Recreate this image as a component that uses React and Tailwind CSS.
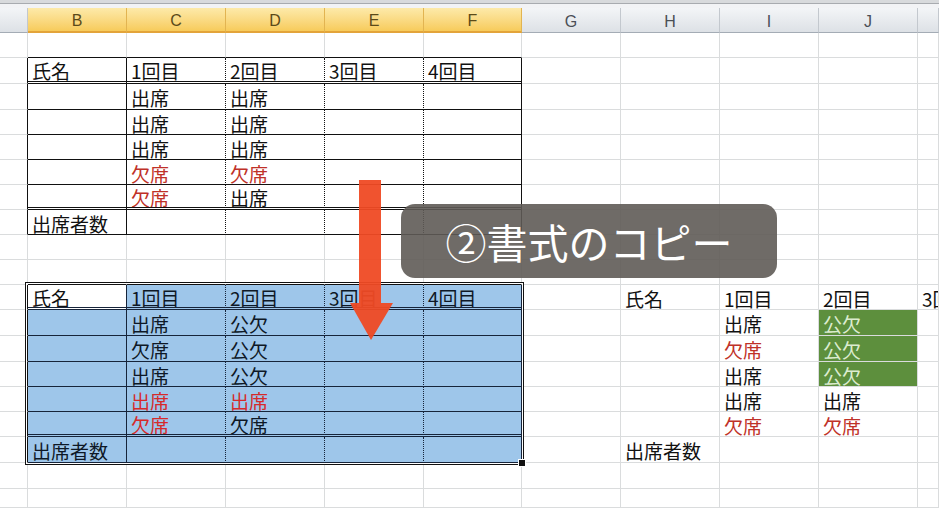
const COLS = [28, 99, 99, 99, 99, 98, 99, 99, 99, 99, 21];
const LETTERS = ["", "B", "C", "D", "E", "F", "G", "H", "I", "J", ""];
const ROWS = [25, 26, 26, 25, 25, 25, 25, 25, 25, 25, 25, 26, 26, 25, 25, 25, 26, 26, 19];

const red = (t) => ({ t, red: true });
const green = (t) => ({ t, green: true });

const HEAD = { 1: "氏名", 2: "1回目", 3: "2回目", 4: "3回目", 5: "4回目" };

const DATA = {
  1: HEAD,
  2: { 2: "出席", 3: "出席" },
  3: { 2: "出席", 3: "出席" },
  4: { 2: "出席", 3: "出席" },
  5: { 2: red("欠席"), 3: red("欠席") },
  6: { 2: red("欠席"), 3: "出席" },
  7: { 1: "出席者数" },
  10: { ...HEAD, 7: "氏名", 8: "1回目", 9: "2回目", 10: "3回目" },
  11: { 2: "出席", 3: "公欠", 8: "出席", 9: green("公欠") },
  12: { 2: "欠席", 3: "公欠", 8: red("欠席"), 9: green("公欠") },
  13: { 2: "出席", 3: "公欠", 8: "出席", 9: green("公欠") },
  14: { 2: red("出席"), 3: red("出席"), 8: "出席", 9: "出席" },
  15: { 2: red("欠席"), 3: "欠席", 8: red("欠席"), 9: red("欠席") },
  16: { 1: "出席者数", 7: "出席者数" },
};

const isTableRow = (r) => (r >= 1 && r <= 7) || (r >= 10 && r <= 16);
const isSel = (r, c) => r >= 10 && r <= 16 && c >= 1 && c <= 5;

function Cell({ r, c }) {
  const sel = isSel(r, c);
  const active = r === 10 && c === 1;
  const raw = DATA[r]?.[c];
  const item = typeof raw === "string" ? { t: raw } : raw;

  // right edge
  let right = "border-r border-r-[#dadcdd]";
  if (isTableRow(r) && c <= 5) {
    if (c === 0) right = "border-r border-r-[#111]";
    else if (c === 1 || c === 5) right = sel ? "border-r border-r-[#16243a]" : "border-r border-r-[#111]";
    else right = sel ? "border-r border-r-[#16243a] [border-right-style:dotted]" : "border-r border-r-[#111] [border-right-style:dotted]";
  }

  // bottom edge
  let bottom = "border-b border-b-[#dadcdd]";
  if (c >= 1 && c <= 5) {
    if (r === 0 || r === 9) bottom = "border-b border-b-[#111]";
    else if (r === 1 || r === 6) bottom = "border-b-[3px] border-b-[#111] [border-bottom-style:double]";
    else if (r === 10 || r === 15) bottom = "border-b-[3px] border-b-[#16243a] [border-bottom-style:double]";
    else if (isTableRow(r)) bottom = sel ? "border-b border-b-[#16243a]" : "border-b border-b-[#111]";
  }

  let bg = "bg-white";
  if (sel && !active) bg = "bg-[#9ec6ea]";
  if (item?.green) bg = "bg-[#5d8f3d]";

  let color = sel && !active ? "text-[#0e1826]" : "text-[#111]";
  if (item?.red) color = sel ? "text-[#d62a2a]" : "text-[#bf3128]";
  if (item?.green) color = "text-[#dcecd0]";

  return (
    <div
      className={`flex shrink-0 items-center overflow-hidden whitespace-nowrap pl-[4px] pt-[3px] text-[19px] leading-[20px] ${right} ${bottom} ${bg} ${color}`}
      style={{ width: COLS[c], height: ROWS[r] }}
    >
      {item?.t}
    </div>
  );
}

function ColumnHeader() {
  return (
    <div className="flex h-[25px]">
      {COLS.map((w, c) => {
        const hot = c >= 1 && c <= 5;
        return (
          <div
            key={c}
            style={{ width: w }}
            className={
              hot
                ? "flex shrink-0 items-center justify-center overflow-hidden border-r border-b-2 border-r-[#e2b451] border-b-[#e3a43a] bg-linear-to-b from-[#fdeaa9] to-[#f7cb5a] pt-[3px] text-[16px] leading-[18px] text-[#5b4a19]"
                : "flex shrink-0 items-center justify-center overflow-hidden border-r border-b border-r-[#c3c8ce] border-b-[#a4acb5] bg-linear-to-b from-[#f3f5f7] to-[#dde1e6] pt-[3px] text-[16px] leading-[18px] text-[#4a4f56]"
            }
          >
            <span style={{ fontFamily: '"Liberation Sans", Arial, sans-serif' }}>{LETTERS[c]}</span>
          </div>
        );
      })}
    </div>
  );
}

export default function App() {
  return (
    <div
      className="relative h-[508px] w-[939px] overflow-hidden bg-white"
      style={{ fontFamily: '"Noto Sans CJK JP", "Noto Sans", sans-serif' }}
    >
      <div className="h-[3px] bg-[#d8dadc]" />
      <div className="h-px bg-[#a8abaf]" />
      <div className="h-[4px] bg-[#f2f3f5]" />
      <ColumnHeader />

      {ROWS.map((h, r) => (
        <div key={r} className="flex">
          {COLS.map((w, c) => (
            <Cell key={c} r={r} c={c} />
          ))}
        </div>
      ))}

      {/* selection frame + fill handle */}
      <div className="pointer-events-none absolute left-[25px] top-[282px] h-[183px] w-[499px] border border-[#111] shadow-[inset_0_0_0_1px_#ffffff]" />
      <div className="absolute left-[518px] top-[459px] h-[8px] w-[8px] border border-white bg-[#111]" />

      {/* red arrow */}
      <svg className="absolute left-[349px] top-[180px] opacity-95" width="45" height="162" viewBox="0 0 45 162">
        <rect x="10" y="0" width="22" height="124" fill="#f04a24" />
        <polygon points="1,123 44,123 22,160" fill="#f04a24" />
      </svg>

      {/* caption */}
      <div className="absolute left-[401px] top-[204px] flex h-[74px] w-[376px] items-center justify-center rounded-[14px] bg-[#5f5b57]/90 text-[41px] leading-none text-white">
        ②書式のコピー
      </div>
    </div>
  );
}
